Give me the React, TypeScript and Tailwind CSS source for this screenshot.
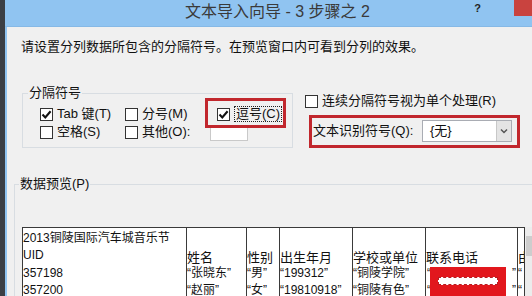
import React from "react";

type CheckProps = { checked?: boolean };

const Check: React.FC<CheckProps> = ({ checked }) => (
  <span className="w-[13px] h-[13px] shrink-0 border border-[#333] bg-white flex items-center justify-center">
    {checked ? (
      <svg width="11" height="11" viewBox="0 0 11 11">
        <path d="M1.5 5.5 L4.3 8.4 L9.6 2.2" fill="none" stroke="#111" strokeWidth="2.1" />
      </svg>
    ) : null}
  </span>
);

type OptProps = { checked?: boolean; label: string; width: string };

const Option: React.FC<OptProps> = ({ checked, label, width }) => (
  <div className={`flex items-center gap-[4px] h-[18px] ${width}`}>
    <Check checked={checked} />
    <span className="whitespace-nowrap">{label}</span>
  </div>
);

// preview grid: first column has a title line, others start one line lower
const columns = [
  { w: "w-[164px]", lines: ["2013铜陵国际汽车城音乐节", "UID", "357198", "357200"], first: true },
  { w: "w-[60px]", lines: ["", "姓名", "“张晓东”", "“赵丽”"] },
  { w: "w-[33px]", lines: ["", "性别", "“男”", "“女”"] },
  { w: "w-[73px]", lines: ["", "出生年月", "“199312”", "“19810918”"] },
  { w: "w-[73px]", lines: ["", "学校或单位", "“铜陵学院”", "“铜陵有色”"] },
];

const App: React.FC = () => {
  return (
    <div className="w-[532px] h-[296px] overflow-hidden flex bg-[#3b3f45] text-[#111] font-['Liberation_Sans','Noto_Sans_CJK_SC',sans-serif]">
      <div className="w-[5px] shrink-0" />
      <div className="flex-1 flex flex-col min-w-0">
        {/* title bar */}
        <div className="h-[27px] shrink-0 bg-[#90c4f1] border-b border-[#86b9e6] flex items-start">
          <div className="pl-[180px] pt-[2px] text-[16px] leading-[20px] text-[#3a3a3a] whitespace-nowrap">
            文本导入向导 - 3 步骤之 2
          </div>
          <div className="ml-auto mr-[33px] pt-[1px] text-[11px] font-bold text-[#222] leading-[14px]">?</div>
          <div className="w-[18px] h-[16px] bg-[#c9433f]" />
        </div>

        {/* body */}
        <div className="flex-1 bg-[#f0f0f0] border-l-2 border-[#90c4f1] overflow-hidden text-[13px]">
          <div className="pl-[14px] pt-[12px] leading-[16px] whitespace-nowrap">
            请设置分列数据所包含的分隔符号。在预览窗口内可看到分列的效果。
          </div>

          <div className="flex items-start mt-[31px]">
            <fieldset className="ml-[15px] w-[271px] border border-[#d8dde2] pb-[6px]">
              <legend className="ml-[5px] px-[1px] leading-[14px] text-[13px]">分隔符号</legend>
              <div className="pl-[17px]">
                <div className="flex items-center mt-[5px]">
                  <Option checked label="Tab 键(T)" width="w-[85px]" />
                  <Option label="分号(M)" width="w-[92px]" />
                  <div className="relative flex items-center gap-[4px] h-[18px]">
                    <div className="absolute -left-[12px] -top-[7px] -right-[4px] -bottom-[5px] border-[3px] border-[#c1272d]" />
                    <Check checked />
                    <span className="border border-dotted border-[#222] px-[1px] leading-[14px] whitespace-nowrap">
                      逗号(C)
                    </span>
                  </div>
                </div>
                <div className="flex items-center">
                  <Option label="空格(S)" width="w-[85px]" />
                  <Option label="其他(O):" width="w-[85px]" />
                  <div className="w-[38px] h-[16px] bg-white border border-[#c9c9c9] mt-[2px]" />
                </div>
              </div>
            </fieldset>

            <div className="ml-[12px] flex flex-col">
              <div className="flex items-center gap-[4px] h-[16px] mt-[7px]">
                <Check />
                <span className="whitespace-nowrap">连续分隔符号视为单个处理(R)</span>
              </div>
              <div className="relative flex items-center mt-[11px] ml-[8px] h-[22px]">
                <div className="absolute -left-[4px] -top-[5px] -right-[8px] -bottom-[6px] border-[3px] border-[#c1272d]" />
                <span className="w-[109px] whitespace-nowrap">文本识别符号(Q):</span>
                <div className="w-[90px] h-[22px] bg-white border border-[#a9acb3] flex items-center">
                  <span className="pl-[7px] flex-1">{"{无}"}</span>
                  <div className="w-[15px] h-[20px] bg-[#e4e4e4] border-l border-[#c8c8c8] flex items-center justify-center">
                    <svg width="8" height="6" viewBox="0 0 8 6">
                      <path d="M1 1.5 L4 4.5 L7 1.5" fill="none" stroke="#555" strokeWidth="1.5" />
                    </svg>
                  </div>
                </div>
              </div>
            </div>
          </div>

          {/* preview */}
          <fieldset className="ml-[7px] mt-[29px] w-[540px] border border-[#d8dde2]">
            <legend className="ml-[4px] px-[1px] leading-[14px] text-[13px]">数据预览(P)</legend>
            <div className="mt-[36px] ml-[7px] flex h-[80px]">
              <div className="flex bg-white border-l border-t border-[#3a3a3a]">
                {columns.map((c, i) => (
                  <div key={i} className={`${c.w} shrink-0 border-r border-[#3a3a3a] pt-[2px] overflow-hidden`}>
                    {c.lines.map((l, j) => (
                      <div
                        key={j}
                        className={`h-[17.3px] leading-[17px] whitespace-nowrap ${
                          c.first ? "text-[12px]" : j === 1 ? "text-[13px] pt-[2px]" : "text-[12px]"
                        }`}
                      >
                        {l}
                      </div>
                    ))}
                  </div>
                ))}
                {/* 联系电话 column with redaction */}
                <div className="relative w-[92px] shrink-0 border-r border-[#3a3a3a] pt-[2px]">
                  <div className="h-[17.3px]" />
                  <div className="h-[17.3px] leading-[17px] text-[13px] pt-[2px] whitespace-nowrap">联系电话</div>
                  <div className="h-[17.3px] leading-[17px] text-[12px] flex justify-between px-[1px]">
                    <span>“</span>
                    <span>”</span>
                  </div>
                  <div className="h-[17.3px] leading-[17px] text-[12px] flex justify-between px-[1px]">
                    <span>“</span>
                    <span>”</span>
                  </div>
                  <div className="absolute left-[4px] top-[39px] w-[76px] h-[40px] bg-[#e2171d]">
                    <div className="ml-[8px] mt-[10px] w-[60px] h-[8px] bg-white border border-dashed border-[#b81c22]" />
                  </div>
                </div>
                <div className="w-[7px] shrink-0 border-r border-[#3a3a3a] pt-[2px] overflow-hidden">
                  <div className="h-[17.3px]" />
                  <div className="h-[17.3px] leading-[17px] text-[13px] pt-[2px] whitespace-nowrap">由</div>
                  <div className="h-[17.3px] leading-[17px] text-[12px]">“</div>
                  <div className="h-[17.3px] leading-[17px] text-[12px]">“</div>
                </div>
              </div>
              <div className="w-[17px] shrink-0 bg-[#ececec] pt-[9px] pl-[1px]">
                <div className="w-[14px] h-[20px] bg-[#cdcdcd]" />
              </div>
            </div>
          </fieldset>
        </div>
      </div>
    </div>
  );
};

export default App;
